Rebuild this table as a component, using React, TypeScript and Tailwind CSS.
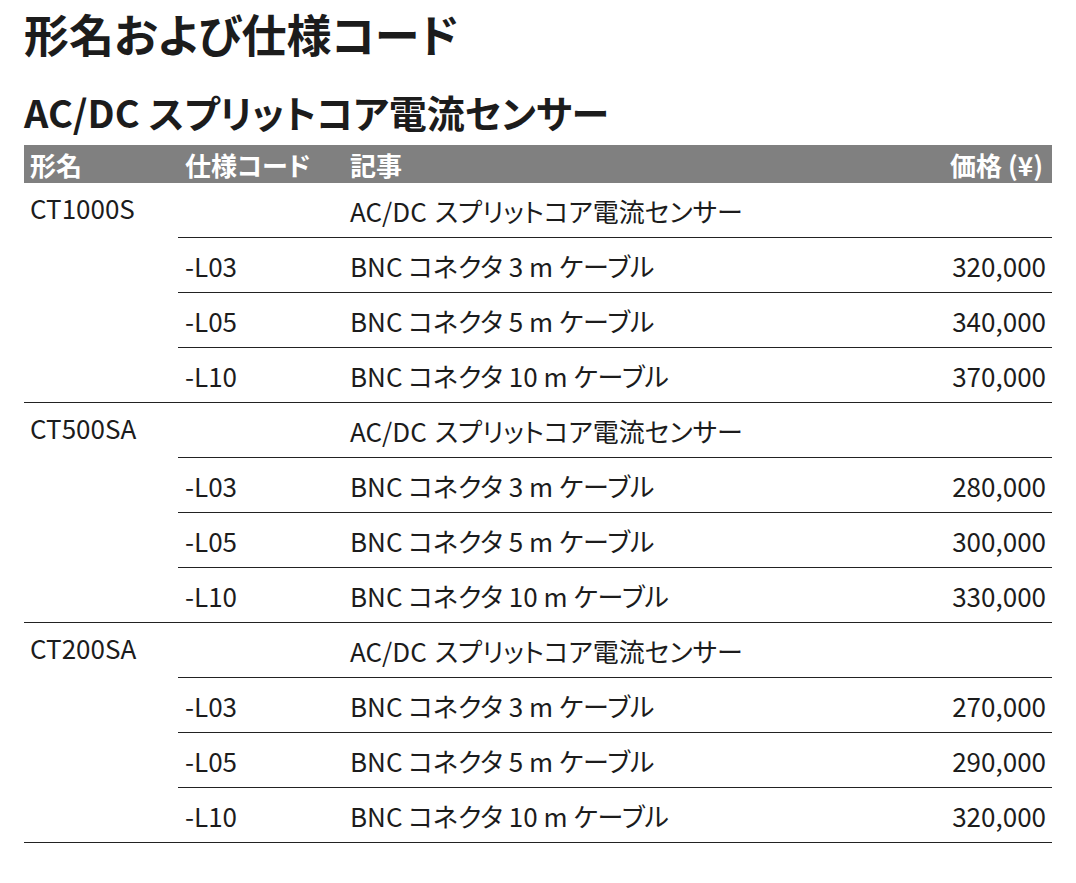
const groups = [
  {
    model: "CT1000S",
    items: [
      { code: "-L03", len: "3", price: "320,000" },
      { code: "-L05", len: "5", price: "340,000" },
      { code: "-L10", len: "10", price: "370,000" },
    ],
  },
  {
    model: "CT500SA",
    items: [
      { code: "-L03", len: "3", price: "280,000" },
      { code: "-L05", len: "5", price: "300,000" },
      { code: "-L10", len: "10", price: "330,000" },
    ],
  },
  {
    model: "CT200SA",
    items: [
      { code: "-L03", len: "3", price: "270,000" },
      { code: "-L05", len: "5", price: "290,000" },
      { code: "-L10", len: "10", price: "320,000" },
    ],
  },
];

const font = "font-['Noto_Sans_CJK_JP','Noto_Sans',sans-serif]";
const line = "border-b-[1.5px] border-[#222]";

export default function App() {
  return (
    <div className={`${font} min-h-screen bg-white px-6 pt-[6px] text-[#1c1c1c] [font-feature-settings:'palt']`}>
      <h1 className="text-[45px] font-bold leading-[56px]">形名および仕様コード</h1>
      <h2 className="mt-[26px] text-[38px] font-bold leading-[48px]">
        <span className="mr-[9px]">AC/DC</span>スプリットコア電流センサー
      </h2>

      <div className="mt-[9px] w-[1028px]">
        <div className="flex h-[38px] items-center bg-[#808080] text-[26px] font-bold text-white">
          <div className="w-[154px] pl-[6px]">形名</div>
          <div className="w-[172px] pl-[7px]">仕様コード</div>
          <div className="flex-1">記事</div>
          <div className="pr-[9px]">価格 (¥)</div>
        </div>

        {groups.map((g) => (
          <div key={g.model} className="flex text-[26px]">
            <div className={`w-[154px] pl-[6px] pt-[10px] leading-[30px] ${line}`}>{g.model}</div>
            <div className="flex-1">
              <div className={`flex h-[55px] items-center ${line}`}>
                <div className="w-[172px]" />
                <div className="flex-1">
                  <span className="mr-[8px]">AC/DC</span>スプリットコア電流センサー
                </div>
              </div>
              {g.items.map((it) => (
                <div key={it.code} className={`flex h-[55px] items-center ${line}`}>
                  <div className="w-[172px] pl-[7px]">{it.code}</div>
                  <div className="flex-1">BNC コネクタ {it.len} m ケーブル</div>
                  <div className="pr-[6px]">{it.price}</div>
                </div>
              ))}
            </div>
          </div>
        ))}
      </div>
    </div>
  );
}
